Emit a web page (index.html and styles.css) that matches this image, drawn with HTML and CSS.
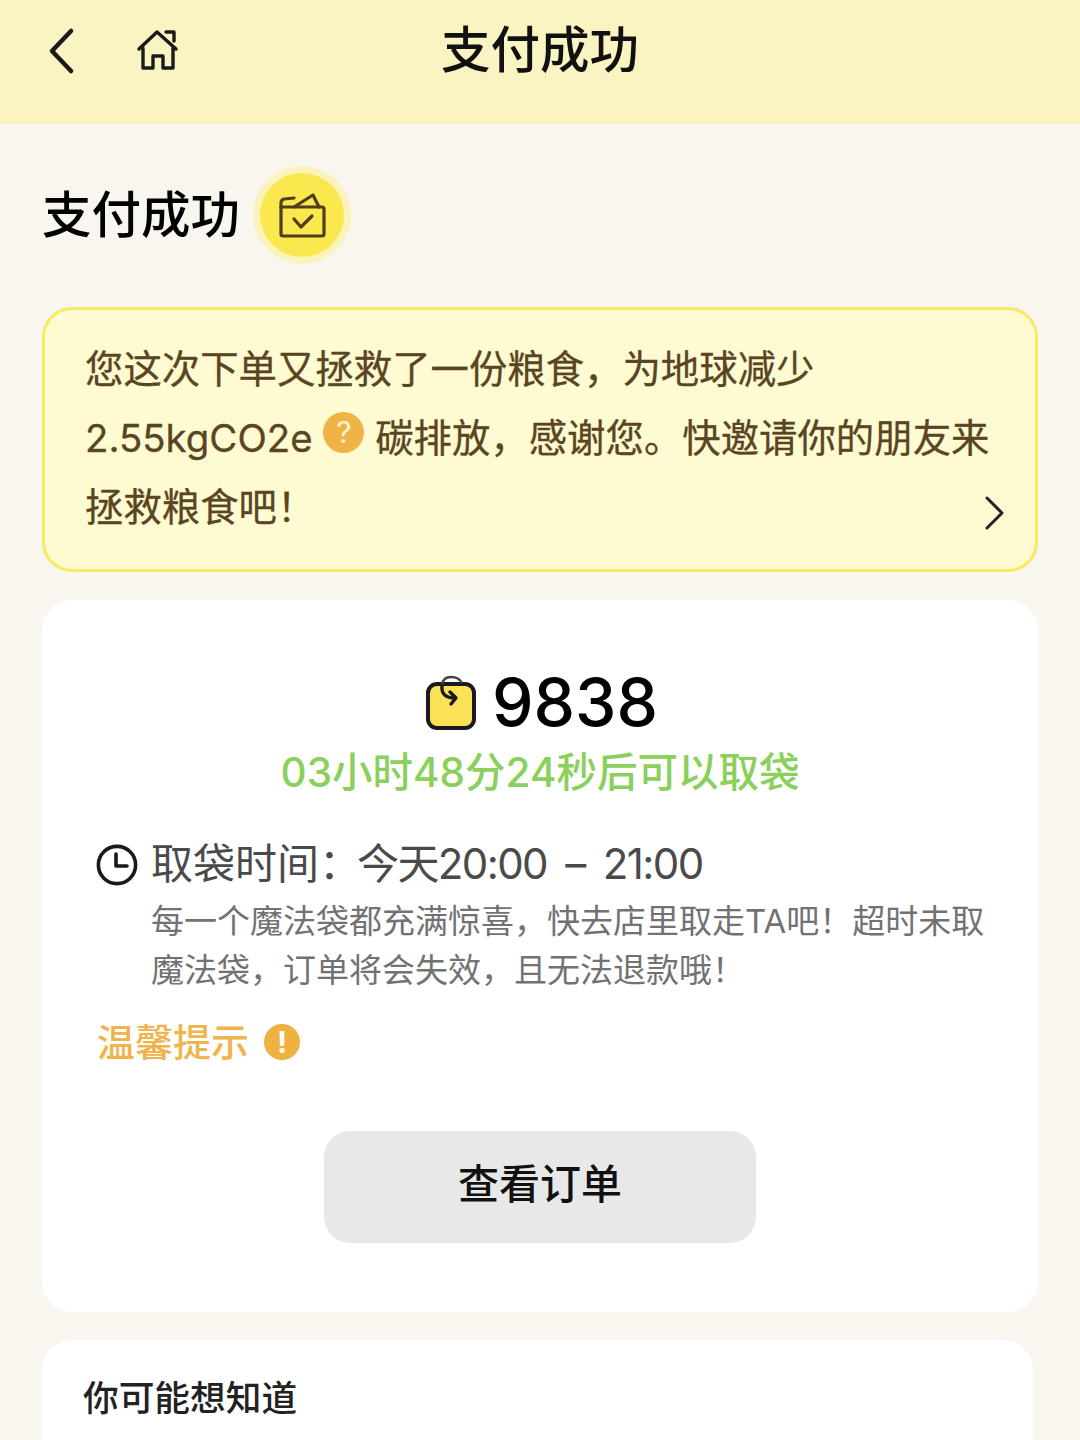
FILE: index.html
```html
<!DOCTYPE html>
<html lang="zh-CN">
<head>
    <meta charset="UTF-8">
    <meta name="viewport" content="width=device-width, initial-scale=1.0">
    <title>支付成功</title>
    <link rel="stylesheet" href="styles.css">
</head>
<body>
    <div class="header">
        <div class="nav-icons">
            <svg class="icon-back" width="32" height="48" viewBox="0 0 32 48" fill="none" stroke="#1a1a1a" stroke-width="4.5" stroke-linecap="round" stroke-linejoin="round">
                <path d="M24 4 L5 24 L24 44"/>
            </svg>
            <svg class="icon-home" width="44" height="44" viewBox="0 0 44 44" fill="none" stroke="#1a1a1a" stroke-width="3.4" stroke-linecap="round" stroke-linejoin="round">
                <path d="M3 20 L21 3 L40 20"/>
                <path d="M30 3 H38 V12"/>
                <path d="M7 19 V39 H17 V27 H27 V39 H37 V19"/>
            </svg>
        </div>
        <div class="title">支付成功</div>
        <div></div>
    </div>

    <div class="container">
        <div class="heading-row">
            <div class="heading">支付成功</div>
            <div class="badge">
                <svg width="48" height="46" viewBox="0 0 48 46" fill="none" stroke="#4f3d1c" stroke-width="3.2" stroke-linecap="round" stroke-linejoin="round">
                    <path d="M3 15 V42 Q3 44 5 44 H44 Q46 44 46 42 V17 Q46 15 44 15 H3 Z"/>
                    <path d="M3 15 V11 Q3 8 6 7 L16 6"/>
                    <path d="M16 15 L35 3 L41 15"/>
                    <path d="M16 27 L23 35 L34 24"/>
                </svg>
            </div>
        </div>

        <div class="notice">
            <div class="notice-text">
                您这次下单又拯救了一份粮食，为地球减少<br>
                2.55kgCO2e <span class="help">?</span> 碳排放，感谢您。快邀请你的朋友来<br>
                拯救粮食吧！
            </div>
            <svg class="notice-arrow" width="20" height="34" viewBox="0 0 20 34" fill="none" stroke="#222" stroke-width="3" stroke-linecap="round" stroke-linejoin="round">
                <path d="M3 2 L18 17 L3 32"/>
            </svg>
        </div>

        <div class="card order-card">
            <div class="code-row">
                <svg width="52" height="56" viewBox="0 0 52 56" fill="none">
                    <rect x="3" y="10" width="46" height="44" rx="9" fill="#fae155" stroke="#1a1a1a" stroke-width="4"/>
                    <path d="M17 11 Q18 3 26 3 Q34 3 37 9" stroke="#444" stroke-width="2.4"/>
                    <path d="M17 12 Q16 24 30 24" stroke="#1a1a1a" stroke-width="3.4" stroke-linecap="round"/>
                    <path d="M25 18 L31 24 L26 30" stroke="#1a1a1a" stroke-width="3.4" stroke-linecap="round" stroke-linejoin="round"/>
                </svg>
                <span class="code">9838</span>
            </div>
            <div class="countdown">03小时48分24秒后可以取袋</div>

            <div class="pickup">
                <svg class="icon-clock" width="42" height="42" viewBox="0 0 42 42" fill="none" stroke="#1a1a1a" stroke-width="3.6" stroke-linecap="round" stroke-linejoin="round">
                    <circle cx="21" cy="21" r="18.6"/>
                    <path d="M20 10 V22 H31"/>
                </svg>
                <div>
                    <div class="pickup-time">取袋时间：<span class="pickup-clock">今天20:00 – 21:00</span></div>
                    <div class="pickup-note">每一个魔法袋都充满惊喜，快去店里取走TA吧！超时未取<br>魔法袋，订单将会失效，且无法退款哦！</div>
                </div>
            </div>

            <div class="tip">
                <span>温馨提示</span>
                <span class="tip-mark">!</span>
            </div>

            <div class="order-button">查看订单</div>
        </div>

        <div class="card faq-card">
            <div class="faq-title">你可能想知道</div>
        </div>
    </div>
</body>
</html>
```

FILE: styles.css
```css
html, body {
    margin: 0;
    height: 1440px;
    overflow: hidden;
}

body {
    font-family: Inter, "Noto Sans CJK SC", sans-serif;
    background: #f8f6ef;
    color: #111;
}

.header {
    height: 124px;
    background: #faf4c2;
    display: grid;
    grid-template-columns: 1fr auto 1fr;
    padding: 0 0 24px;
    box-sizing: border-box;
    align-items: center;
}

.nav-icons {
    display: flex;
    align-items: center;
    gap: 57px;
    padding-left: 47px;
    margin-top: 2px;
}

.title {
    font-size: 49.5px;
    font-weight: 500;
    line-height: 100px;
}

.container {
    padding: 0 42px;
}

.heading-row {
    display: flex;
    align-items: center;
    gap: 20px;
    height: 183px;
}

.heading {
    font-size: 49.5px;
    font-weight: 500;
    line-height: 60px;
    margin-top: -2px;
    color: #000;
}

.badge {
    width: 84px;
    height: 84px;
    margin-top: -2px;
    border-radius: 50%;
    background: #fbe84f;
    box-shadow: 0 0 0 7px #faf3bc;
    display: flex;
    align-items: center;
    justify-content: center;
}

.notice {
    position: relative;
    height: 265px;
    box-sizing: border-box;
    padding: 25px 40px 0;
    background: #fefad2;
    border: 3px solid #f9ea63;
    border-radius: 30px;
}

.notice-text {
    font-size: 38.4px;
    line-height: 69px;
    color: #5a4522;
    -webkit-text-stroke: 0.3px #5a4522;
    white-space: nowrap;
}

.help {
    display: inline-block;
    width: 41px;
    height: 41px;
    border-radius: 50%;
    background: #f0b345;
    color: #fdf3d0;
    font-size: 30px;
    line-height: 41px;
    text-align: center;
    vertical-align: 9px;
    -webkit-text-stroke: 0;
}

.notice-arrow {
    position: absolute;
    right: 31px;
    bottom: 39px;
}

.card {
    background: #fff;
    border-radius: 30px;
}

.order-card {
    margin-top: 28px;
    height: 712px;
    box-sizing: border-box;
    padding-top: 62px;
}

.code-row {
    display: flex;
    align-items: center;
    justify-content: center;
    gap: 15px;
    height: 80px;
    padding-left: 3px;
}

.code {
    font-size: 66px;
    font-weight: 500;
    color: #000;
    line-height: 80px;
}

.countdown {
    margin-top: 1px;
    text-align: center;
    font-size: 40.5px;
    line-height: 60px;
    font-weight: 500;
    color: #8bcf5c;
}

.pickup {
    display: flex;
    gap: 13px;
    margin-top: 28px;
    padding-left: 54px;
}

.icon-clock {
    margin-top: 13px;
    flex-shrink: 0;
}

.pickup-time {
    font-size: 42px;
    line-height: 66px;
    color: #4a4a4a;
    white-space: nowrap;
}

.pickup-clock {
    margin-left: -4px;
    letter-spacing: -1.6px;
    word-spacing: 8px;
}

.pickup-note {
    font-size: 33px;
    line-height: 49px;
    color: #727272;
    white-space: nowrap;
}

.tip {
    display: flex;
    align-items: center;
    gap: 15px;
    margin-top: 19px;
    padding-left: 55px;
    font-size: 38px;
    line-height: 56px;
    font-weight: 500;
    color: #efb44c;
}

.tip-mark {
    width: 36px;
    height: 36px;
    border-radius: 50%;
    background: #efb140;
    color: #fff;
    font-size: 30px;
    font-weight: 700;
    line-height: 36px;
    text-align: center;
}

.order-button {
    width: 432px;
    height: 112px;
    margin: 61px auto 0;
    background: #e8e8e8;
    border-radius: 26px;
    text-align: center;
    font-size: 41px;
    font-weight: 500;
    line-height: 106px;
    color: #111;
}

.faq-card {
    margin-top: 28px;
    margin-right: 5px;
    height: 100px;
    padding: 30px 41px 0;
    box-sizing: border-box;
    border-radius: 30px 30px 0 0;
}

.faq-title {
    font-size: 35.7px;
    font-weight: 500;
    line-height: 56px;
    color: #222;
}
```
